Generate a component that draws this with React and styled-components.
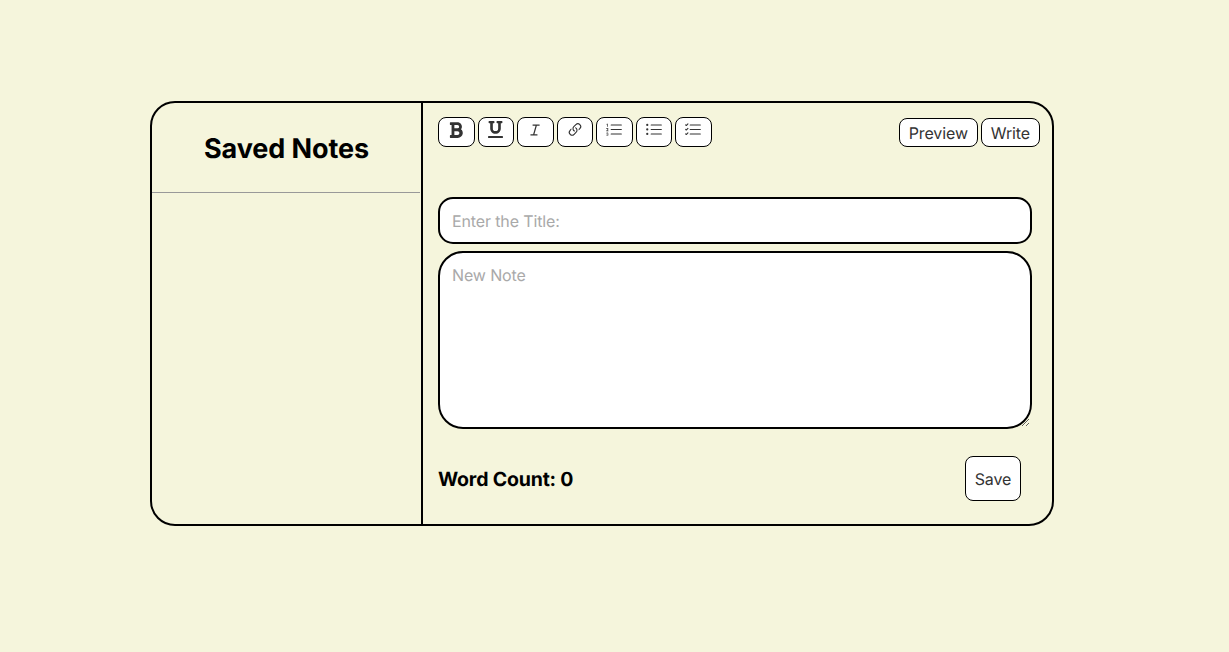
import React from "react";
import styled, { createGlobalStyle } from "styled-components";
import { BsLink45Deg, BsListOl, BsListUl, BsListCheck } from "react-icons/bs";
import { AiOutlineItalic } from "react-icons/ai";
import { FaBold, FaUnderline } from "react-icons/fa";

const Global = createGlobalStyle`
  html, body { margin: 0; padding: 0; }
  * { text-rendering: geometricPrecision; }
  body { background: #f5f5dc; font-family: Inter, "Liberation Sans", sans-serif; color: #000; }
`;
const Page = styled.main`
  width: 1229px; height: 652px; padding-top: 101px; padding-left: 150px; box-sizing: border-box;
`;
const Card = styled.section`
  width: 904px; height: 425px; box-sizing: border-box; border: 2px solid #000; border-radius: 25px;
  display: grid; grid-template-columns: 269px 2px 1fr; overflow: hidden;
`;
const Sidebar = styled.aside`display: flex; flex-direction: column;`;
const SideHeader = styled.header`
  height: 90px; box-sizing: border-box; border-bottom: 1px solid #999; display: flex; align-items: center; justify-content: center;
  width: 268px;
`;
const SideTitle = styled.h2`margin: 2px 0 0 1px; font-size: 27px; font-weight: 700; line-height: 1; letter-spacing: -0.1px;`;
const Divider = styled.div`background: #000;`;
const Editor = styled.div`
  padding: 14px 12px 0 15px; display: flex; flex-direction: column;
`;
const Toolbar = styled.div`display: flex; justify-content: space-between; align-items: flex-start; height: 80px;`;
const Group = styled.div`display: flex; gap: ${p => p.$gap}px;`;
const ToolButton = styled.button`
  width: 36.5px; height: 30px; padding: 0 0 5px; box-sizing: border-box; background: #fff; color: #333;
  border: 1px solid #000; border-radius: 8px; display: flex; align-items: center; justify-content: center;
`;
const TabButton = styled.button`
  height: 29px; padding: 0 9px; margin-top: 1px; box-sizing: border-box; background: #fff; color: #333;
  border: 1px solid #000; border-radius: 8px; font: 400 16px Inter, sans-serif; letter-spacing: -0.13px;
`;
const Fields = styled.div`width: 594px; display: flex; flex-direction: column; gap: 7px;`;
const TitleInput = styled.input`
  height: 47px; box-sizing: border-box; width: 100%; padding: 0 12px; border: 2px solid #000; border-radius: 15px;
  background: #fff; font: 400 16px Inter, sans-serif; letter-spacing: -0.13px; outline: none;
  &::placeholder { color: #a9a9a9; opacity: 1; }
`;
const NoteInput = styled.textarea`
  height: 178px; box-sizing: border-box; width: 100%; padding: 12px; margin: 0; border: 2px solid #000; border-radius: 25px;
  background: #fff; font: 400 16px/1.25 Inter, sans-serif; letter-spacing: -0.13px; outline: none; display: block;
  &::placeholder { color: #a9a9a9; opacity: 1; }
`;
const Footer = styled.footer`
  width: 583px; margin-top: 27px; display: flex; justify-content: space-between; align-items: center;
`;
const WordCount = styled.strong`font-size: 19.5px; font-weight: 700; letter-spacing: -0.18px;`;
const SaveButton = styled.button`
  width: 56px; height: 45px; box-sizing: border-box; padding: 0; background: #fff; color: #333;
  border: 1px solid #000; border-radius: 8px; font: 400 16px Inter, sans-serif; letter-spacing: -0.13px;
`;

export default function App() {
  const tools = [
    [FaBold, 18], [FaUnderline, 17], [AiOutlineItalic, 16], [BsLink45Deg, 18],
    [BsListOl, 18], [BsListUl, 18], [BsListCheck, 18],
  ];
  return (
    <Page>
      <Global />
      <Card>
        <Sidebar>
          <SideHeader><SideTitle>Saved Notes</SideTitle></SideHeader>
        </Sidebar>
        <Divider />
        <Editor>
          <Toolbar>
            <Group $gap={3}>
              {tools.map(([Icon, size], i) => (
                <ToolButton key={i}><Icon size={size} /></ToolButton>
              ))}
            </Group>
            <Group $gap={3}>
              <TabButton>Preview</TabButton>
              <TabButton>Write</TabButton>
            </Group>
          </Toolbar>
          <Fields>
            <TitleInput placeholder="Enter the Title:" />
            <NoteInput placeholder="New Note" />
          </Fields>
          <Footer>
            <WordCount>Word Count: 0</WordCount>
            <SaveButton>Save</SaveButton>
          </Footer>
        </Editor>
      </Card>
    </Page>
  );
}
